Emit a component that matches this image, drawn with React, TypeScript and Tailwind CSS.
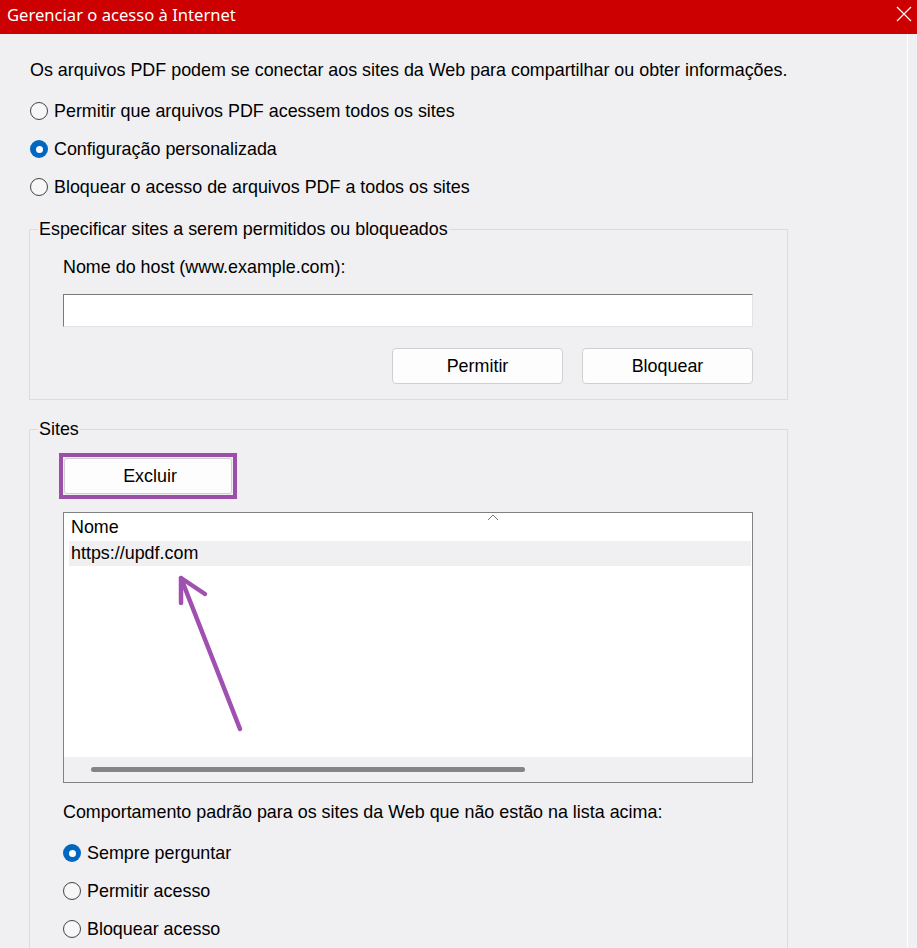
import React from 'react';

const font = { fontFamily: '"Liberation Sans", Arial, sans-serif' };

const Radio: React.FC<{ checked?: boolean; label: string }> = ({ checked, label }) => (
  <label className="flex items-center h-[38px] gap-[6px] text-[17.9px] text-black">
    {checked ? (
      <span className="w-[18px] h-[18px] rounded-full bg-[#0067c0] flex items-center justify-center shrink-0">
        <span className="w-[7px] h-[7px] rounded-full bg-white" />
      </span>
    ) : (
      <span className="w-[18px] h-[18px] rounded-full border border-[#444] bg-[#f7f7f7] shrink-0" />
    )}
    <span>{label}</span>
  </label>
);

const WinButton: React.FC<{ label: string }> = ({ label }) => (
  <button className="h-[36px] w-[171px] bg-[#fdfdfd] border border-[#d0d0d0] rounded-[4px] text-[17.9px] text-black">
    {label}
  </button>
);

export default function App() {
  return (
    <div className="relative w-[917px] h-[948px] overflow-hidden bg-[#f0eff1]" style={font}>
      {/* title bar */}
      <div className="h-[34px] bg-[#cc0000] flex items-center justify-between pl-[7px] pr-[5px]">
        <span className="text-white text-[16.6px] leading-none pb-[4px]" style={{ fontFamily: '"Noto Sans", "Open Sans", sans-serif' }}>
          Gerenciar o acesso à Internet
        </span>
        <svg width="16" height="16" viewBox="0 0 16 16" className="mb-[6px]">
          <path d="M1 1 L15 15 M15 1 L1 15" stroke="#fff" strokeWidth="1.2" />
        </svg>
      </div>

      <div className="flex">
        <div className="w-[907px] pl-[29px] pt-[26px]">
          <p className="pl-[1px] text-[17.9px] leading-[20px] text-black">
            Os arquivos PDF podem se conectar aos sites da Web para compartilhar ou obter informações.
          </p>
          <div className="pl-[1px] mt-[12px] flex flex-col">
            <Radio label="Permitir que arquivos PDF acessem todos os sites" />
            <Radio checked label="Configuração personalizada" />
            <Radio label="Bloquear o acesso de arquivos PDF a todos os sites" />
          </div>

          {/* group 1 */}
          <fieldset className="mt-[13px] w-[759px] border border-[#dcdbdd] p-0 m-0">
            <legend className="ml-[8px] px-[1px] text-[17.9px] leading-[20px] text-black">
              Especificar sites a serem permitidos ou bloqueados
            </legend>
            <div className="pl-[33px] pr-[34px] pt-[18px] pb-[15px]">
              <div className="text-[17.9px] leading-[20px] text-black">Nome do host (www.example.com):</div>
              <div className="mt-[17px] h-[33px] w-[690px] bg-white border border-[#e3e3e3] border-t-[#7a7a7a] border-l-[#7a7a7a]" />
              <div className="mt-[21px] flex justify-end gap-[19px]">
                <WinButton label="Permitir" />
                <WinButton label="Bloquear" />
              </div>
            </div>
          </fieldset>

          {/* group 2 */}
          <fieldset className="mt-[19px] w-[759px] border border-[#dcdbdd] p-0 m-0 h-[600px]">
            <legend className="ml-[8px] px-[1px] text-[17.9px] leading-[20px] text-black">Sites</legend>
            <div className="pl-[29px] pt-[14px]">
              <div className="w-[178px] h-[46px] border-4 border-[#9b4fa8] p-[1px]">
                <button className="w-full h-full bg-[#fdfdfd] border border-[#d0d0d0] rounded-[3px] text-[17.9px] text-black pl-[4px]">
                  Excluir
                </button>
              </div>
              <div className="ml-[4px] mt-[13px] w-[690px] h-[271px] bg-white border border-[#828282] flex flex-col">
                <div className="relative h-[28px] pl-[7px] pt-[4px] text-[17.9px] leading-[20px] text-black">
                  Nome
                  <svg width="12" height="7" viewBox="0 0 12 7" className="absolute left-[423px] top-[1px]">
                    <path d="M1 6 L6 1 L11 6" fill="none" stroke="#777" strokeWidth="1" />
                  </svg>
                </div>
                <div className="ml-[5px] mr-[1px] h-[25px] bg-[#f0eff1] pl-[2px] flex items-center text-[17.9px] text-black">
                  https://updf.com
                </div>
                <div className="flex-1" />
                <div className="h-[25px] bg-[#f0eff1] flex items-center pl-[27px]">
                  <div className="w-[434px] h-[5px] rounded-full bg-[#858585]" />
                </div>
              </div>
              <div className="ml-[4px] mt-[19px] text-[17.9px] leading-[20px] text-black">
                Comportamento padrão para os sites da Web que não estão na lista acima:
              </div>
              <div className="ml-[4px] mt-[12px] flex flex-col">
                <Radio checked label="Sempre perguntar" />
                <Radio label="Permitir acesso" />
                <Radio label="Bloquear acesso" />
              </div>
            </div>
          </fieldset>
        </div>
        <div className="w-px bg-white" />
      </div>

      {/* annotation arrow */}
      <svg className="absolute inset-0 pointer-events-none" width="917" height="948">
        <g stroke="#a050b0" strokeWidth="4.5" strokeLinecap="round" fill="none">
          <path d="M240 729 L181 578" />
          <path d="M181 603 L181 578 L205 594" strokeLinejoin="round" />
        </g>
      </svg>
    </div>
  );
}
